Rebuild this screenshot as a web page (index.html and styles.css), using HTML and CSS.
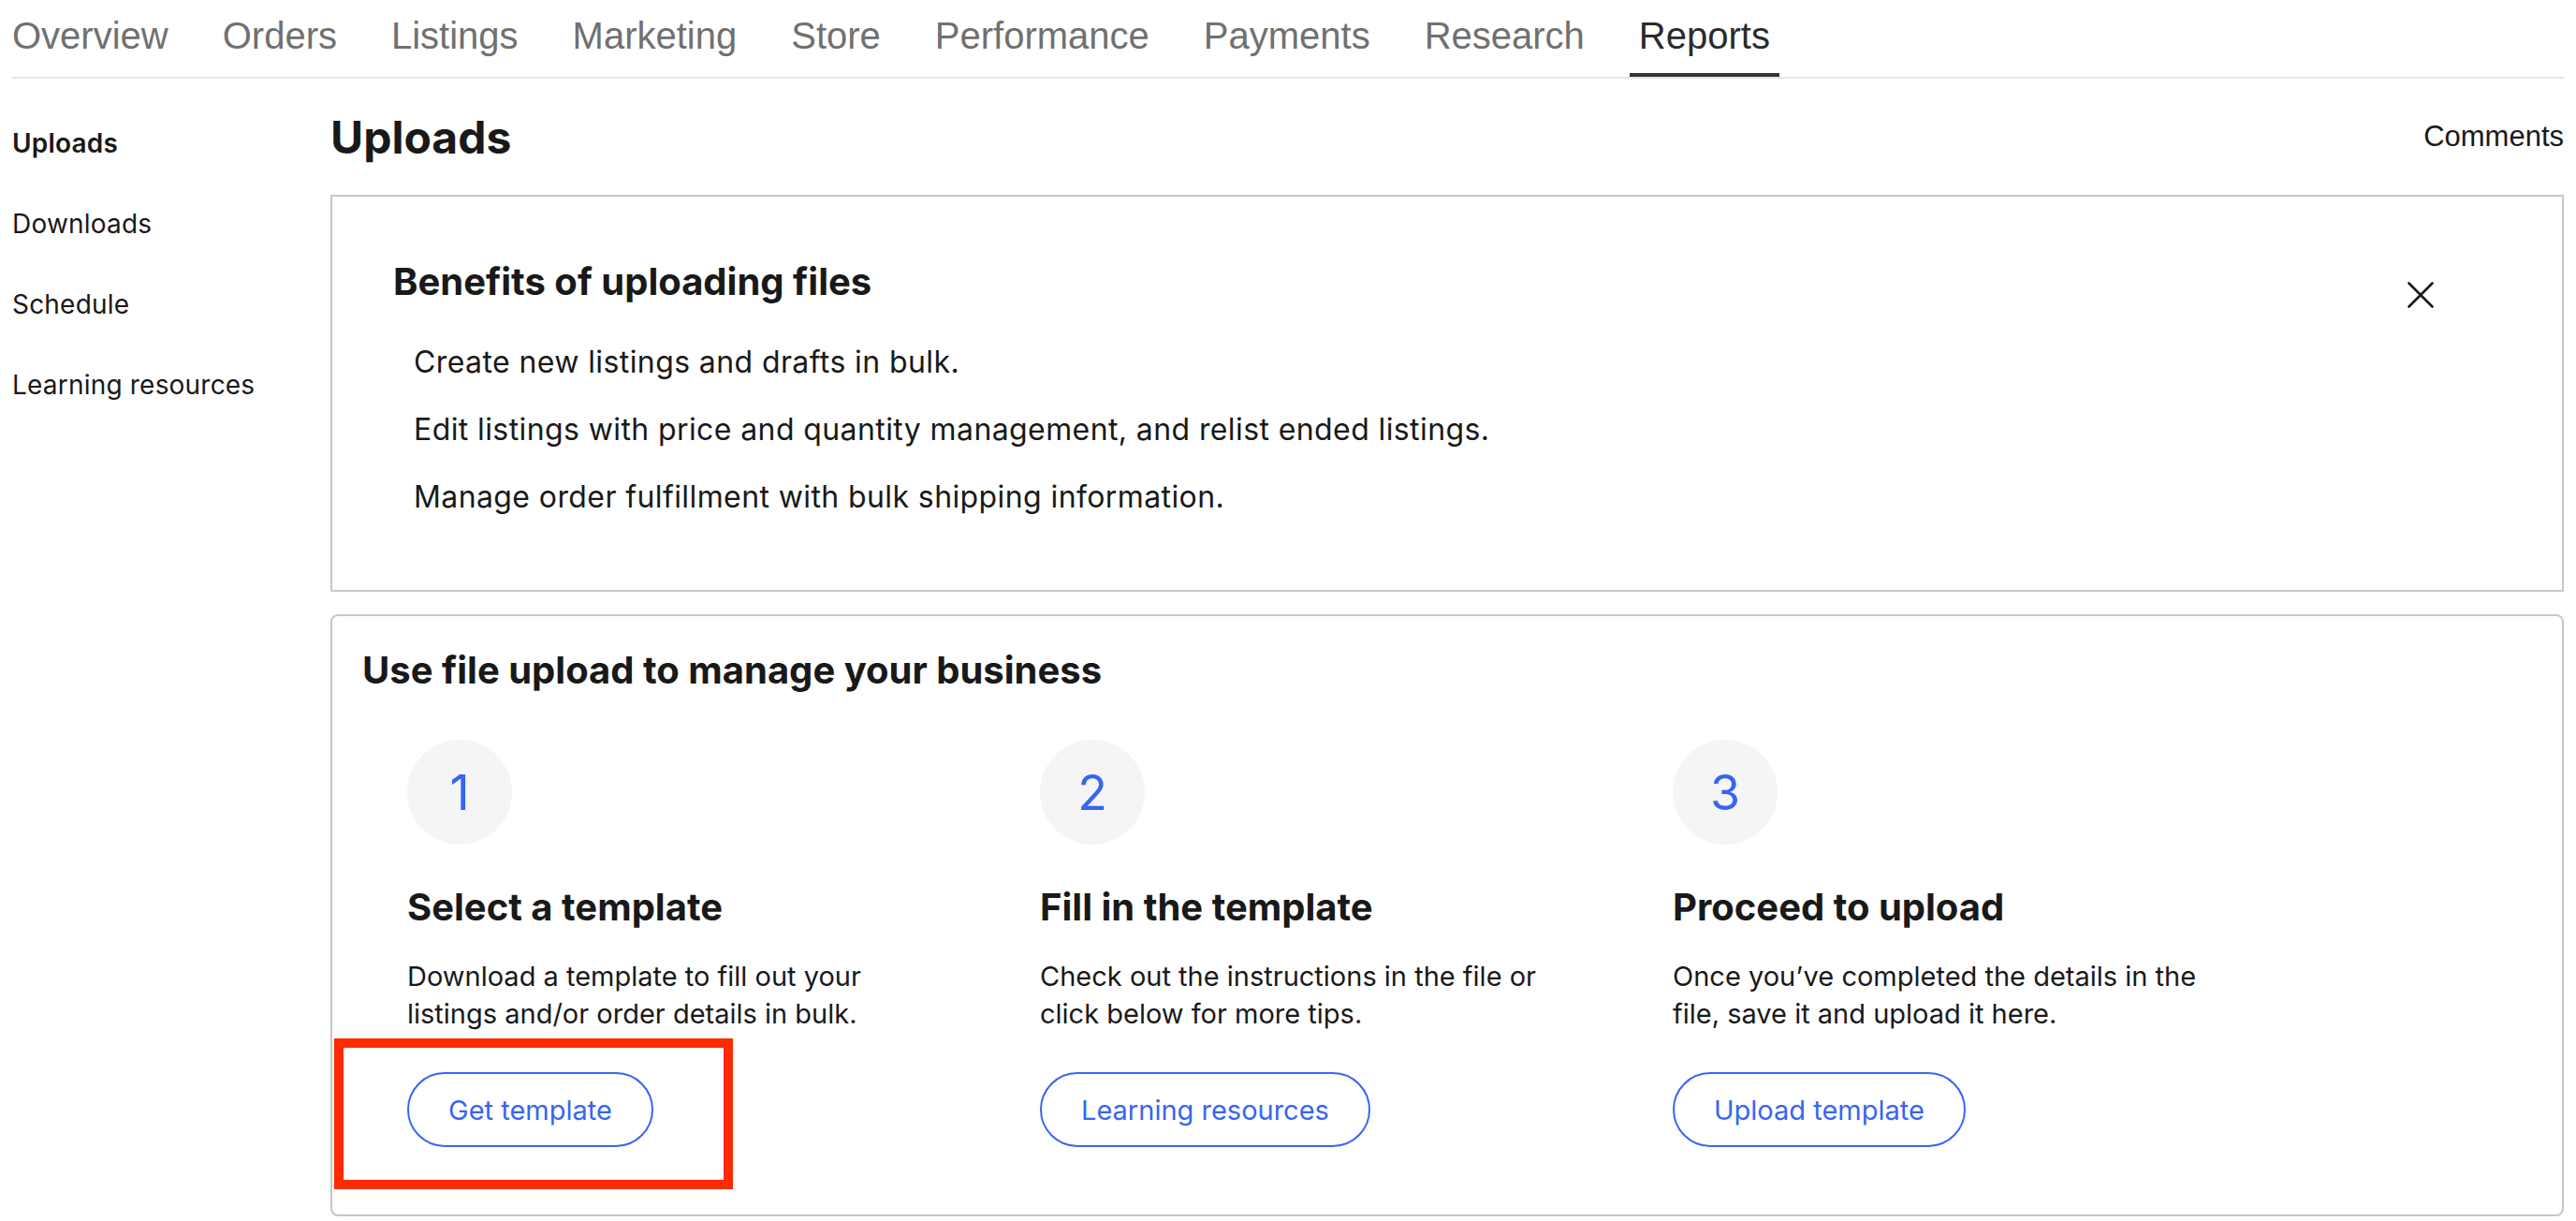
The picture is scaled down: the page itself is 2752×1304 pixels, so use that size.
FILE: index.html
```html
<!DOCTYPE html>
<html lang="en">
<head>
    <meta charset="UTF-8">
    <meta name="viewport" content="width=device-width, initial-scale=1.0">
    <title>Seller Hub - Uploads</title>
    <link rel="stylesheet" href="styles.css">
</head>
<body>
    <nav class="tabs">
        <a class="tab" href="#">Overview</a>
        <a class="tab" href="#">Orders</a>
        <a class="tab" href="#">Listings</a>
        <a class="tab" href="#">Marketing</a>
        <a class="tab" href="#">Store</a>
        <a class="tab" href="#">Performance</a>
        <a class="tab" href="#">Payments</a>
        <a class="tab" href="#">Research</a>
        <a class="tab active" href="#">Reports</a>
    </nav>

    <div class="layout">
        <aside class="sidebar">
            <a class="side-link current" href="#">Uploads</a>
            <a class="side-link" href="#">Downloads</a>
            <a class="side-link" href="#">Schedule</a>
            <a class="side-link" href="#">Learning resources</a>
        </aside>

        <main class="main">
            <div class="title-row">
                <h1>Uploads</h1>
                <a class="comments" href="#">Comments</a>
            </div>

            <section class="card benefits">
                <div class="benefits-head">
                    <h2>Benefits of uploading files</h2>
                    <button class="close" aria-label="Close">
                        <svg width="28" height="28" viewBox="0 0 28 28">
                            <path d="M1.5 1.5 L26.5 26.5 M26.5 1.5 L1.5 26.5" stroke="#191919" stroke-width="2.6" stroke-linecap="round" fill="none"/>
                        </svg>
                    </button>
                </div>
                <ul class="benefit-list">
                    <li>Create new listings and drafts in bulk.</li>
                    <li>Edit listings with price and quantity management, and relist ended listings.</li>
                    <li>Manage order fulfillment with bulk shipping information.</li>
                </ul>
            </section>

            <section class="card steps-card">
                <h2>Use file upload to manage your business</h2>
                <div class="steps">
                    <div class="step">
                        <div class="step-num">1</div>
                        <h3>Select a template</h3>
                        <p>Download a template to fill out your listings and/or order details in bulk.</p>
                        <div class="btn-wrap">
                            <button class="btn">Get template</button>
                            <span class="highlight"></span>
                        </div>
                    </div>
                    <div class="step">
                        <div class="step-num">2</div>
                        <h3>Fill in the template</h3>
                        <p>Check out the instructions in the file or click below for more tips.</p>
                        <div class="btn-wrap">
                            <button class="btn">Learning resources</button>
                        </div>
                    </div>
                    <div class="step">
                        <div class="step-num">3</div>
                        <h3>Proceed to upload</h3>
                        <p>Once you’ve completed the details in the file, save it and upload it here.</p>
                        <div class="btn-wrap">
                            <button class="btn">Upload template</button>
                        </div>
                    </div>
                </div>
            </section>
        </main>
    </div>
</body>
</html>
```

FILE: styles.css
```css
body {
    margin: 0;
    background-color: #fff;
    color: #191919;
    font-family: 'Inter', 'Noto Sans', sans-serif;
}

a {
    text-decoration: none;
    color: inherit;
}

/* top tabs */
.tabs {
    display: flex;
    gap: 58px;
    margin: 0 13px;
    border-bottom: 2px solid #e5e5e5;
}

.tab {
    position: relative;
    height: 82px;
    box-sizing: border-box;
    padding-top: 15px;
    font-family: 'Liberation Sans', Arial, sans-serif;
    font-size: 40px;
    line-height: 46px;
    color: #707070;
}

.tab.active {
    color: #2b2b2b;
}

.tab.active::after {
    content: "";
    position: absolute;
    left: -10px;
    right: -10px;
    bottom: 0;
    height: 4px;
    background-color: #333;
}

.layout {
    display: flex;
    padding: 0 13px;
}

/* left menu */
.sidebar {
    width: 340px;
    flex-shrink: 0;
    padding-top: 26px;
    display: flex;
    flex-direction: column;
}

.side-link {
    font-size: 28px;
    line-height: 86px;
    letter-spacing: 0.2px;
    color: #191919;
}

.side-link.current {
    font-weight: 600;
}

.main {
    flex: 1;
}

.title-row {
    display: flex;
    justify-content: space-between;
    align-items: flex-start;
    margin-top: 33px;
    margin-bottom: 31px;
}

h1 {
    margin: 0;
    font-size: 48px;
    line-height: 60px;
    font-weight: 700;
}

.comments {
    padding-top: 12px;
    font-family: 'Liberation Sans', Arial, sans-serif;
    font-size: 31px;
    line-height: 34px;
    color: #191919;
}

.card {
    border: 2px solid #c7c7c7;
}

h2, h3 {
    margin: 0;
    font-size: 40px;
    line-height: 48px;
    font-weight: 700;
}

/* benefits box */
.benefits {
    padding: 63px 137px 63px 65px;
}

.benefits-head {
    display: flex;
    justify-content: space-between;
    align-items: center;
}

.close {
    width: 28px;
    height: 28px;
    margin-top: 28px;
    padding: 0;
    border: none;
    background: none;
    cursor: pointer;
}

.close svg {
    display: block;
}

.benefit-list {
    list-style: none;
    margin: 22px 0 0;
    padding-left: 22px;
}

.benefit-list li {
    font-size: 32px;
    line-height: 72px;
    letter-spacing: 0.4px;
}

/* steps box */
.steps-card {
    margin-top: 24px;
    border-radius: 8px;
    padding: 34px 32px 72px;
}

.steps {
    display: flex;
    gap: 100px;
    padding-left: 48px;
    margin-top: 50px;
}

.step {
    width: 576px;
}

.step-num {
    width: 112px;
    height: 112px;
    border-radius: 50%;
    background-color: #f5f5f5;
    color: #3665f3;
    font-size: 52px;
    display: flex;
    align-items: center;
    justify-content: center;
    margin-bottom: 43px;
}

.step p {
    max-width: 570px;
    margin: 30px 0 42px;
    font-size: 29px;
    line-height: 40px;
}

.btn-wrap {
    position: relative;
    display: inline-block;
}

.btn {
    height: 80px;
    padding: 0 42px;
    border: 2px solid #3665f3;
    border-radius: 40px;
    background-color: #fff;
    color: #3665f3;
    font-family: 'Inter', 'Noto Sans', sans-serif;
    font-size: 29px;
    cursor: pointer;
}

/* red annotation frame */
.highlight {
    position: absolute;
    left: -78px;
    top: -36px;
    right: -85px;
    bottom: -45px;
    border: 10px solid #fe2a00;
    pointer-events: none;
}
```
